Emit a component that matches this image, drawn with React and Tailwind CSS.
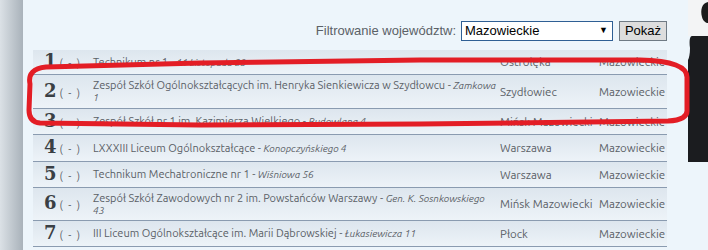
import React from "react";

const rows = [
  { n: "1", name: "Technikum nr 1", street: "11 Listopada 23", city: "Ostrołęka", h: "h-[25px]" },
  { n: "2", name: "Zespół Szkół Ogólnokształcących im. Henryka Sienkiewicza w Szydłowcu", street: "Zamkowa", street2: "1", city: "Szydłowiec", h: "h-[34px]" },
  { n: "3", name: "Zespół Szkół nr 1 im. Kazimierza Wielkiego", street: "Budowlana 4", city: "Mińsk Mazowiecki", h: "h-[26px]" },
  { n: "4", name: "LXXXIII Liceum Ogólnokształcące", street: "Konopczyńskiego 4", city: "Warszawa", h: "h-[27px]" },
  { n: "5", name: "Technikum Mechatroniczne nr 1", street: "Wiśniowa 56", city: "Warszawa", h: "h-[26px]" },
  { n: "6", name: "Zespół Szkół Zawodowych nr 2 im. Powstańców Warszawy", street: "Gen. K. Sosnkowskiego", street2: "43", city: "Mińsk Mazowiecki", h: "h-[33px]" },
  { n: "7", name: "III Liceum Ogólnokształcące im. Marii Dąbrowskiej", street: "Łukasiewicza 11", city: "Płock", h: "h-[26px]" },
];

function Row({ r }) {
  return (
    <div
      className={`flex items-center ${r.h} border-b border-[#8a9bb0] bg-gradient-to-b from-[#dde6ee] to-[#edf3f8] text-[#5a6066]`}
    >
      <div className="w-[55px] shrink-0 pl-[11px] flex items-baseline whitespace-nowrap">
        <span className="font-bold text-[18px] leading-none text-[#3a3f44]" style={{ fontFamily: '"DejaVu Serif", serif' }}>
          {r.n}
        </span>
        <span className="ml-[3px] text-[10.5px] tracking-[1.5px]">( - )</span>
      </div>
      <div className="w-[407px] shrink-0 pl-[5px] leading-[12px] text-[11px] whitespace-nowrap">
        <div>
          {r.name} - <span className="italic text-[10px]">{r.street}</span>
        </div>
        {r.street2 && <div className="italic text-[10px]">{r.street2}</div>}
      </div>
      <div className="w-[98px] shrink-0 pl-[5px] text-[11.5px] whitespace-nowrap">{r.city}</div>
      <div className="flex-1 pl-[6px] text-[11.5px] whitespace-nowrap">Mazowieckie</div>
    </div>
  );
}

export default function App() {
  return (
    <div className="relative w-[708px] h-[250px] overflow-hidden flex bg-[#edf5fb]" style={{ fontFamily: '"Ubuntu", "Lato", "DejaVu Sans", sans-serif' }}>
      <div className="w-[23px] h-full bg-gradient-to-r from-[#dbe1e6] to-[#a9b2ba]" />
      <div className="flex-1 flex flex-col">
        <div className="flex items-center justify-end mt-[21px] h-[20px] pr-[41px]" style={{ fontFamily: '"Liberation Sans", Arial, sans-serif' }}>
          <span className="text-[13px] text-[#5b6167] mr-[5px]">Filtrowanie województw:</span>
          <div className="w-[152px] h-[20px] bg-white border border-[#2f5f94] flex items-center justify-between px-[3px] text-[13px] text-black">
            <span>Mazowieckie</span>
            <span className="text-[9px] mr-[1px]">▼</span>
          </div>
          <div className="ml-[6px] w-[48px] h-[20px] bg-[#dddddd] border border-[#6f7a84] flex items-center justify-center text-[13px] text-black">
            Pokaż
          </div>
        </div>
        <div className="mt-[9px] ml-[10px] w-[634px] flex flex-col">
          {rows.map((r) => (
            <Row key={r.n} r={r} />
          ))}
        </div>
      </div>
      {/* silhouette on the right */}
      <svg className="absolute right-0 top-0" width="20" height="162" viewBox="0 0 20 162">
        <rect x="0" y="0" width="20" height="36" fill="#f3f4f5" />
        <path d="M20 2 C14 3 12 10 14 17 C15 21 18 23 20 23 Z" fill="#1b1b1b" />
        <path d="M4 36 C2 36 1 40 2 48 C2 54 1 58 0 60 L0 162 L20 162 L20 36 Z" fill="#1b1c1f" />
      </svg>
      {/* red hand-drawn ellipse */}
      <svg className="absolute left-0 top-0 pointer-events-none" width="708" height="250">
        <path
          d="M30 84 Q27 69 46 67 L200 63 L420 60 L640 60 Q688 61 687 78 L687 110 Q688 120 668 121 L420 124 L200 125 L40 123 Q29 122 29 110 Z"
          fill="none"
          stroke="#e31d25"
          strokeWidth="5"
          strokeLinejoin="round"
        />
      </svg>
    </div>
  );
}
